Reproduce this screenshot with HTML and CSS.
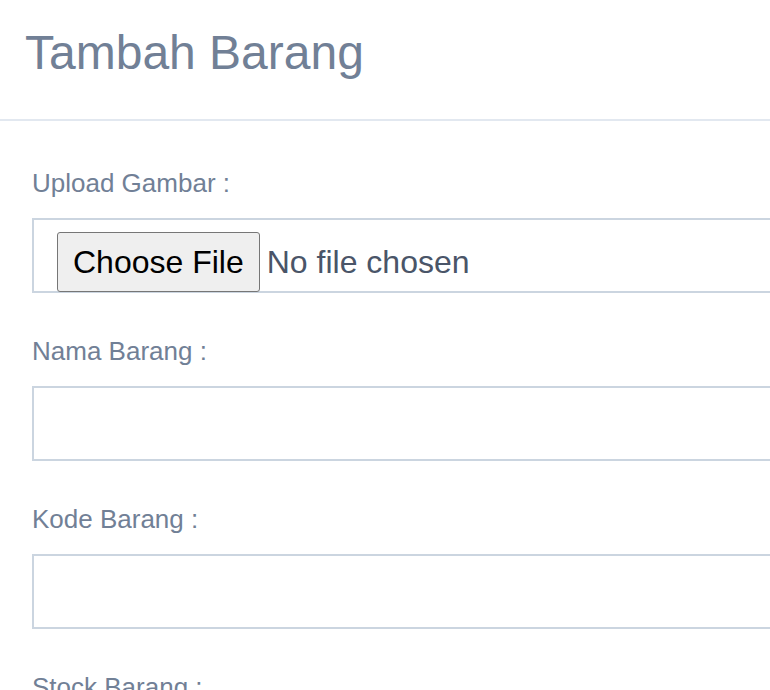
FILE: index.html
```html
<!DOCTYPE html>
<html lang="id">
<head>
<meta charset="utf-8">
<title>Tambah Barang</title>
<link rel="stylesheet" href="styles.css">
</head>
<body>
<div class="page">
  <header class="header">
    <h1 class="title">Tambah Barang</h1>
  </header>
  <form class="form">
    <div class="field">
      <label class="label">Upload Gambar :</label>
      <div class="file-box">
        <button type="button" class="file-btn">Choose File</button>
        <span class="file-text">No file chosen</span>
      </div>
    </div>
    <div class="field">
      <label class="label">Nama Barang :</label>
      <div class="text-box"></div>
    </div>
    <div class="field">
      <label class="label">Kode Barang :</label>
      <div class="text-box"></div>
    </div>
    <div class="field">
      <label class="label">Stock Barang :</label>
      <div class="text-box"></div>
    </div>
  </form>
</div>
</body>
</html>
```

FILE: styles.css
```css
html, body {
  margin: 0;
  padding: 0;
  background: #ffffff;
  overflow: hidden;
  height: 100%;
}

body {
  font-family: "Liberation Sans", Arial, sans-serif;
}

.page {
  width: 820px;
}

.header {
  padding: 24px 0 38px 25px;
  border-bottom: 2px solid #e2e8f0;
}

.title {
  margin: 0;
  font-size: 48px;
  line-height: 57px;
  font-weight: 400;
  color: #718096;
}

.form {
  padding: 43px 0 0 32px;
  display: flex;
  flex-direction: column;
  gap: 39px;
}

.field {
  display: flex;
  flex-direction: column;
}

.label {
  font-size: 26px;
  line-height: 38px;
  color: #718096;
  margin-bottom: 16px;
}

.file-box,
.text-box {
  box-sizing: border-box;
  height: 75px;
  border: 2px solid #cbd5e0;
  background: #fff;
}

.file-box {
  display: flex;
  align-items: flex-start;
  padding: 12px 0 0 23px;
}

.file-btn {
  box-sizing: border-box;
  height: 60px;
  padding: 0 15px;
  margin: 0 7px 0 0;
  font-family: "Liberation Sans", Arial, sans-serif;
  font-size: 32px;
  color: #000;
  background: #efefef;
  border: 1px solid #767676;
  border-radius: 3px;
}

.file-text {
  font-size: 32px;
  line-height: 60px;
  color: #4a5568;
}
```
